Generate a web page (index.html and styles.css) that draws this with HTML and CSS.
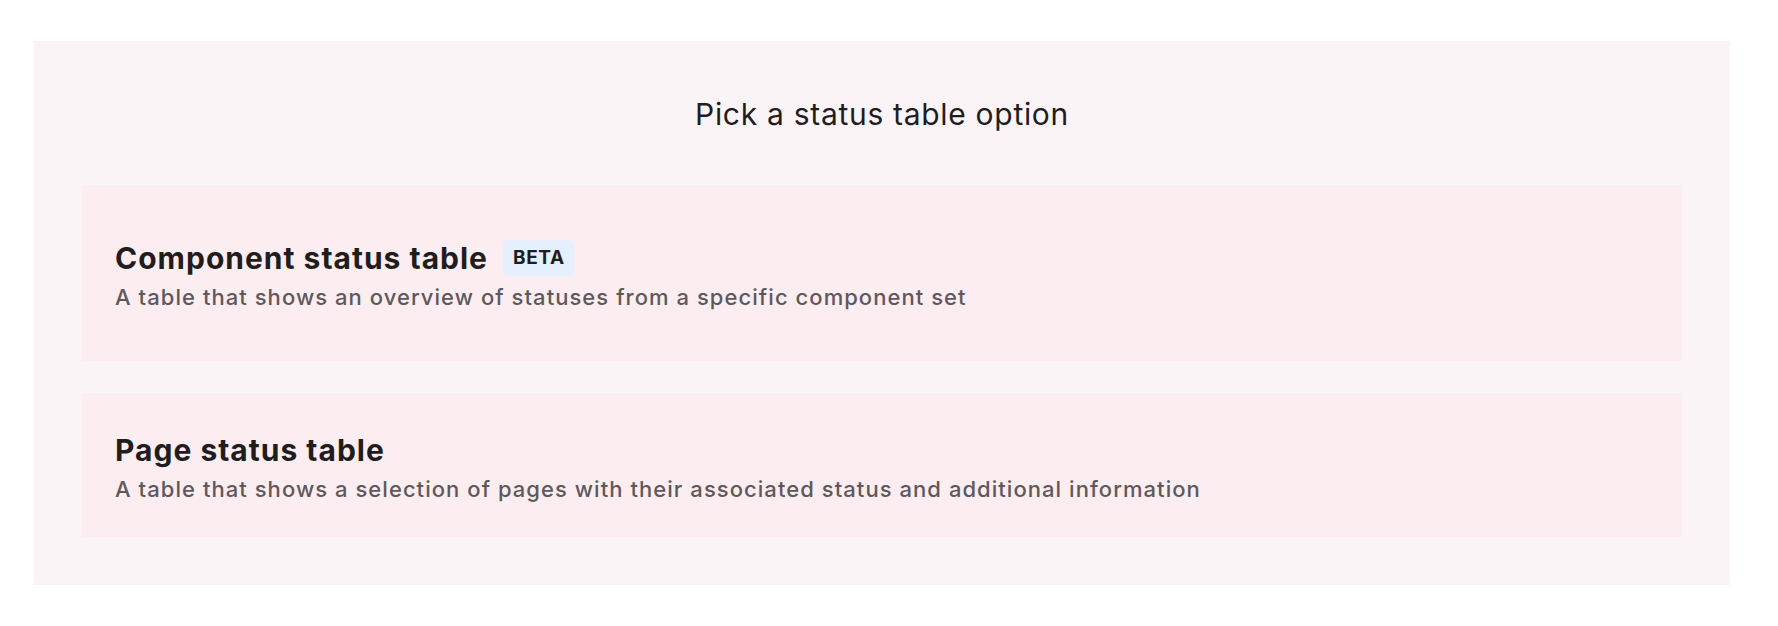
FILE: index.html
```html
<!DOCTYPE html>
<html lang="en">
<head>
    <meta charset="UTF-8">
    <meta name="viewport" content="width=device-width, initial-scale=1.0">
    <title>Pick a status table option</title>
    <link rel="stylesheet" href="styles.css">
</head>
<body>
    <div class="picker">
        <h2 class="picker-title">Pick a status table option</h2>

        <div class="option-list">
            <div class="option-card option-card--beta">
                <div class="option-head">
                    <h3 class="option-name">Component status table</h3>
                    <span class="badge">BETA</span>
                </div>
                <p class="option-desc">A table that shows an overview of statuses from a specific component set</p>
            </div>

            <div class="option-card">
                <div class="option-head">
                    <h3 class="option-name">Page status table</h3>
                </div>
                <p class="option-desc">A table that shows a selection of pages with their associated status and additional information</p>
            </div>
        </div>
    </div>
</body>
</html>
```

FILE: styles.css
```css
/* General styles */
body {
    margin: 0;
    padding: 0;
    font-family: Inter, "Noto Sans", Arial, sans-serif;
    background-color: #ffffff;
    color: #1f1d1e;
}

/* Panel */
.picker {
    margin: 41px 48px 0 34px;
    padding: 55px 48px 48px;
    background-color: #faf4f6;
}

.picker-title {
    margin: 0 0 53px;
    font-size: 30px;
    line-height: 36px;
    font-weight: 400;
    letter-spacing: 0.7px;
    text-align: center;
}

/* Option cards */
.option-list {
    display: flex;
    flex-direction: column;
    gap: 32px;
}

.option-card {
    padding: 39px 33px 34px;
    background-color: #fcedf1;
    cursor: pointer;
}

.option-card--beta {
    padding-top: 55px;
    padding-bottom: 50px;
}

.option-head {
    display: flex;
    align-items: center;
    gap: 15px;
}

.option-name {
    margin: 0;
    font-size: 30px;
    line-height: 36px;
    font-weight: 700;
    letter-spacing: 1px;
}

.badge {
    display: inline-block;
    padding: 0 9px 0 10px;
    height: 36px;
    line-height: 36px;
    font-size: 19px;
    font-weight: 700;
    letter-spacing: 0.6px;
    background-color: #e4f0fd;
    border-radius: 5px;
}

.option-desc {
    margin: 7px 0 0;
    font-size: 22px;
    line-height: 28px;
    font-weight: 500;
    letter-spacing: 1.05px;
    color: #5d595b;
}
```
